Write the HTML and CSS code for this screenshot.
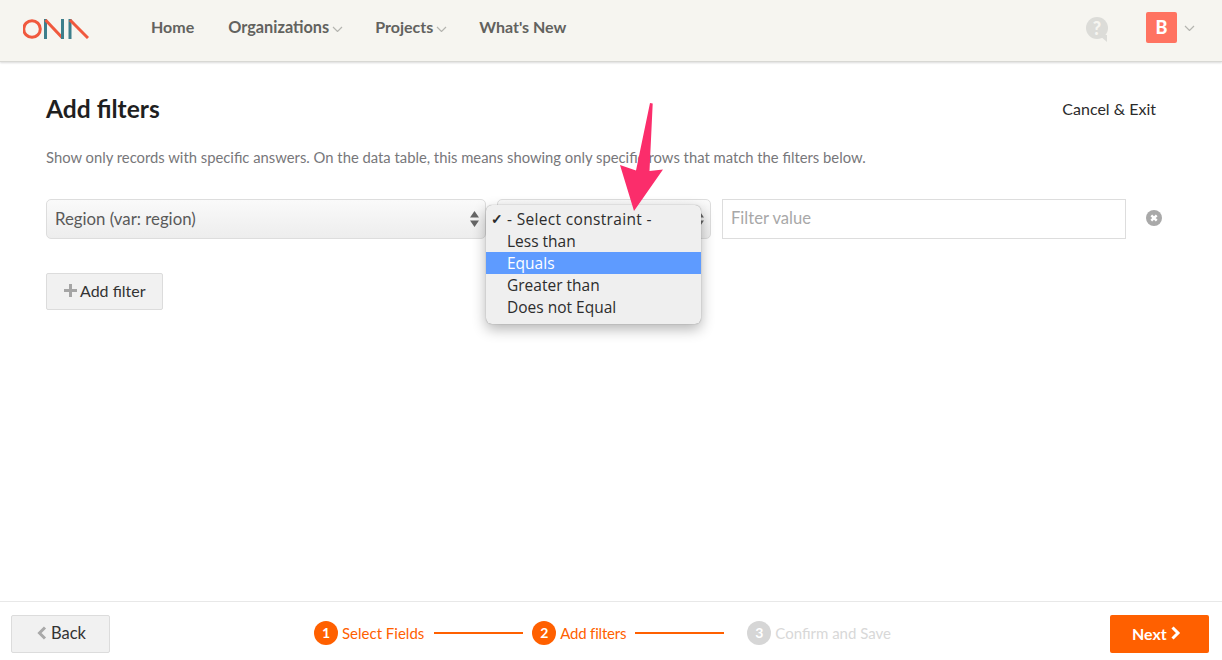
FILE: index.html
```html
<!DOCTYPE html>
<html lang="en">
<head>
  <meta charset="UTF-8">
  <title>Add filters</title>
  <link rel="stylesheet" href="styles.css">
</head>
<body>
  <nav class="topbar">
    <svg class="logo" width="66" height="20" viewBox="0 0 66 20" fill="none" stroke-width="3">
      <circle cx="9" cy="10" r="8.300" stroke="#f0593e"/>
      <path d="M22.500 20V0" stroke="#3d7f8c"/>
      <path d="M22.500 1L39.500 19" stroke="#f0593e"/>
      <path d="M39.500 0V20" stroke="#3d7f8c"/>
      <path d="M47 20V0" stroke="#3d7f8c"/>
      <path d="M47 1L65 19" stroke="#f0593e"/>
    </svg>
    <ul class="menu">
      <li class="home">Home</li>
      <li class="wide">Organizations<svg class="chev" width="11" height="6" viewBox="0 0 11 6"><path d="M1 1l4.500 4.500L10 1"/></svg></li>
      <li>Projects<svg class="chev" width="11" height="6" viewBox="0 0 11 6"><path d="M1 1l4.500 4.500L10 1"/></svg></li>
      <li>What's New</li>
    </ul>
    <div class="help"><span>?</span></div>
    <div class="avatar">B</div>
    <svg class="chev user-chev" width="11" height="6" viewBox="0 0 11 6"><path d="M1 1l4.500 4.500L10 1"/></svg>
  </nav>

  <main class="content">
    <div class="title-row">
      <h1>Add filters</h1>
      <a class="cancel">Cancel &amp; Exit</a>
    </div>
    <p class="hint">Show only records with specific answers. On the data table, this means showing only specific rows that match the filters below.</p>

    <div class="filter-row">
      <div class="select select-field">Region (var: region)
        <svg class="updown" width="9" height="16" viewBox="0 0 9 16"><path d="M4.500 0L9 6.500H0zM4.500 16L0 9.500H9z"/></svg>
      </div>
      <div class="select select-op">
        <svg class="updown" width="9" height="16" viewBox="0 0 9 16"><path d="M4.500 0L9 6.500H0zM4.500 16L0 9.500H9z"/></svg>
      </div>
      <div class="value">Filter value</div>
      <svg class="remove" width="16" height="16" viewBox="0 0 16 16">
        <circle cx="8" cy="8" r="8" fill="#a9a9a9"/>
        <path d="M5.300 5.300l5.400 5.400M10.700 5.300l-5.400 5.400" stroke="#fff" stroke-width="2.400"/>
      </svg>
    </div>

    <button class="btn add-btn"><svg width="13" height="13" viewBox="0 0 13 13"><path d="M5 0h3v5h5v3H8v5H5V8H0V5h5z" fill="#a5a5a5"/></svg>Add filter</button>
  </main>

  <!-- native select popup, open over the row -->
  <ul class="popup">
    <li class="current"><span class="tick">✓</span>- Select constraint -</li>
    <li>Less than</li>
    <li class="active">Equals</li>
    <li>Greater than</li>
    <li>Does not Equal</li>
  </ul>

  <svg class="arrow" width="50" height="112" viewBox="0 0 50 112">
    <path d="M30 0L32.700 0.500L29.500 68L43 66.500L14 108L0 62L16 67.500Z" fill="#fb2d6b"/>
  </svg>

  <footer class="footer">
    <button class="btn back-btn"><svg width="10" height="14" viewBox="0 0 10 14"><path d="M8 1.500L2.500 7L8 12.500" fill="none" stroke="#a9a9a9" stroke-width="3"/></svg>Back</button>
    <div class="steps">
      <span class="num">1</span><span class="step-label first">Select Fields</span>
      <span class="line"></span>
      <span class="num">2</span><span class="step-label tight">Add filters</span>
      <span class="line"></span>
      <span class="num off">3</span><span class="step-label off">Confirm and Save</span>
    </div>
    <button class="btn next-btn">Next<svg width="11" height="14" viewBox="0 0 11 14"><path d="M2.500 1.500L8 7L2.500 12.500" fill="none" stroke="#fff" stroke-width="3"/></svg></button>
  </footer>
</body>
</html>
```

FILE: styles.css
```css
* {
  box-sizing: border-box;
}

html, body {
  height: 100%;
}

body {
  margin: 0;
  font-family: "Lato", "Liberation Sans", sans-serif;
  background-color: #fff;
  color: #222;
  display: flex;
  flex-direction: column;
  overflow: hidden;
}

.topbar {
  display: flex;
  align-items: center;
  height: 62px;
  flex-shrink: 0;
  padding-left: 23px;
  background-color: #f6f5f0;
  border-bottom: 1px solid #d8d8d4;
  box-shadow: 0 1px 2px rgba(0, 0, 0, 0.15);
}

.logo {
  margin-bottom: 3px;
}

.menu {
  display: flex;
  gap: 32px;
  list-style: none;
  margin: 0 0 8px 62px;
  padding: 0;
  font-size: 16px;
  font-weight: 700;
  color: #62625e;
}

.menu .home {
  margin-right: 2px;
}

.menu .wide {
  font-size: 16.300px;
}

.chev {
  fill: none;
  stroke: #b5b5b0;
  stroke-width: 1.2;
  margin-left: 3px;
  vertical-align: 1px;
}

.help {
  width: 22px;
  height: 22px;
  margin-left: auto;
  margin-bottom: 6px;
  border-radius: 50%;
  background-color: #dcdcd8;
  color: #f6f5f0;
  font-size: 18px;
  font-weight: 900;
  line-height: 22px;
  text-align: center;
  position: relative;
}

.help::after {
  content: "";
  position: absolute;
  right: 1px;
  bottom: -3px;
  border-top: 7px solid #dcdcd8;
  border-left: 8px solid transparent;
}

.avatar {
  width: 31px;
  height: 31px;
  margin: 0 0 6px 38px;
  border-radius: 2px;
  background-color: #ff7361;
  color: #fff;
  font-size: 18px;
  font-weight: 900;
  line-height: 31px;
  text-align: center;
}

.user-chev {
  margin: 0 27px 6px 7px;
}

.content {
  flex: 1;
  padding: 32px 66px 0 46px;
}

.title-row {
  display: flex;
  justify-content: space-between;
  align-items: center;
}

h1 {
  margin: 0;
  font-size: 24.600px;
  line-height: 30px;
  font-weight: 700;
  color: #1f1f1f;
}

.cancel {
  padding-bottom: 2px;
  font-size: 16px;
  color: #2b2b2b;
}

.hint {
  margin: 23px 0 0;
  font-size: 14.800px;
  line-height: 20px;
  color: #77777a;
}

.filter-row {
  display: flex;
  align-items: center;
  gap: 11px;
  margin-top: 32px;
}

.select {
  height: 40px;
  flex-shrink: 0;
  display: flex;
  align-items: center;
  justify-content: space-between;
  padding: 0 6px 2px 8px;
  border: 1px solid #ddd;
  border-radius: 5px;
  background: linear-gradient(#fafafa, #ededed);
  font-size: 16.800px;
  color: #5a5a5a;
}

.select-field {
  width: 440px;
}

.select-op {
  width: 214px;
  justify-content: flex-end;
}

.updown {
  fill: #666;
  margin-top: 2px;
}

.value {
  width: 404px;
  height: 40px;
  flex-shrink: 0;
  padding-left: 8px;
  border: 1px solid #ddd;
  font-size: 16.600px;
  line-height: 36px;
  color: #a8a8a8;
}

.remove {
  flex-shrink: 0;
  margin: -2px 0 0 9px;
}

.btn {
  display: flex;
  align-items: center;
  font-family: inherit;
  font-size: 16px;
  border-radius: 2px;
  cursor: pointer;
}

.add-btn,
.back-btn {
  color: #333;
  background-color: #f1f1f1;
  border: 1px solid #dcdcdc;
}

.add-btn {
  gap: 3px;
  width: 117px;
  height: 37px;
  margin-top: 34px;
  padding: 0 0 2px 17px;
}

.footer {
  display: flex;
  align-items: center;
  justify-content: space-between;
  height: 59px;
  flex-shrink: 0;
  padding: 6px 13px 0 11px;
  border-top: 1px solid #e8e8e8;
}

.back-btn {
  gap: 4px;
  width: 99px;
  height: 38px;
  padding: 0 0 2px 25px;
  font-size: 16.500px;
}

.next-btn {
  gap: 3px;
  width: 99px;
  height: 38px;
  padding: 0 0 2px 22px;
  border: 0;
  font-weight: 700;
  color: #fff;
  background-color: #ff6000;
}

.steps {
  display: flex;
  align-items: center;
  margin: 0 15px 2px 0;
  font-size: 15px;
  color: #ff6000;
}

.num {
  width: 24px;
  height: 24px;
  margin-right: 4px;
  border-radius: 50%;
  background-color: #ff6000;
  color: #fff;
  font-size: 14px;
  font-weight: 700;
  line-height: 24px;
  text-align: center;
}

.num.off {
  margin-left: 14px;
  background-color: #d6d6d6;
}

.step-label.first {
  margin-right: 1px;
}

.step-label.tight {
  letter-spacing: -0.200px;
}

.step-label.off {
  color: #d8d8d8;
}

.line {
  width: 89px;
  height: 2px;
  margin: 0 9px;
  background-color: #ff6000;
}

.popup {
  position: absolute;
  left: 486px;
  top: 205px;
  width: 215px;
  height: 119px;
  margin: 0;
  padding: 3px 0;
  list-style: none;
  border-radius: 6px;
  background-color: #efefef;
  box-shadow: 0 0 1px rgba(0, 0, 0, 0.45), 0 5px 14px rgba(0, 0, 0, 0.3);
  font-family: "Open Sans", "Noto Sans", sans-serif;
  font-size: 15.500px;
  color: #2c2c2c;
}

.popup li {
  position: relative;
  height: 22px;
  padding-left: 21px;
  line-height: 22px;
  white-space: nowrap;
}

.popup .current {
  letter-spacing: 0.330px;
}

.popup .active {
  background-color: #5e9bff;
  color: #fff;
}

.tick {
  position: absolute;
  left: 5px;
  font-size: 14px;
  font-weight: 700;
}

.arrow {
  position: absolute;
  left: 620px;
  top: 103px;
}
```
